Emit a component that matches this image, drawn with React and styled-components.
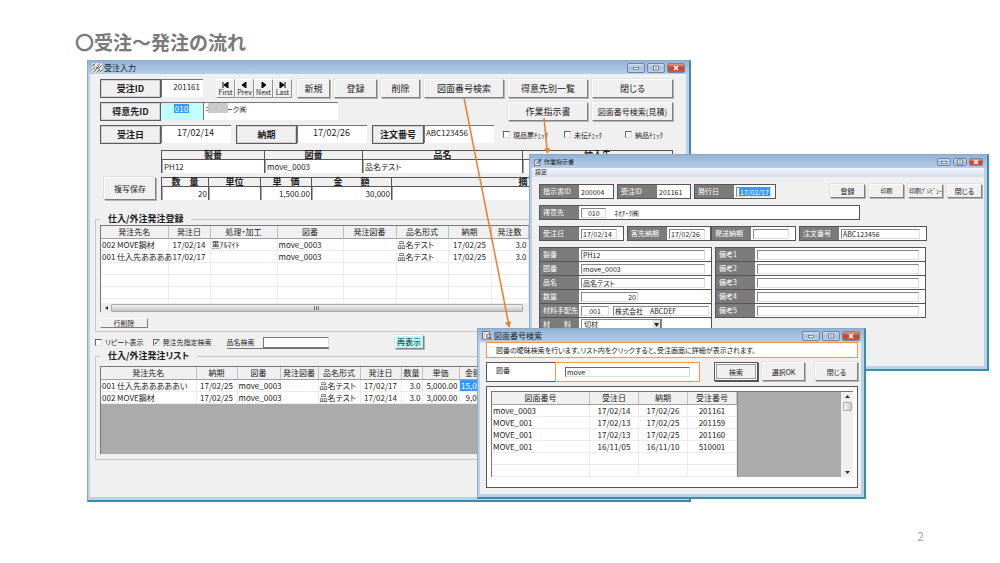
import styled, { createGlobalStyle, css } from "styled-components";

const GlobalStyle = createGlobalStyle`
  * {
    box-sizing: border-box;
  }
  body {
    margin: 0;
    background: #fff;
    color: #1c1c1c;
    font-family: "Noto Sans CJK JP", "Liberation Sans", sans-serif;
    font-size: 8px;
    line-height: 12px;
    font-feature-settings: "palt";
  }
  button,
  input,
  select {
    font: inherit;
    font-feature-settings: inherit;
    color: inherit;
    margin: 0;
    padding: 0;
    border-radius: 0;
    min-width: 0;
  }
`;

const Slide = styled.main`
  position: relative;
  min-height: 563px;
  overflow: hidden;
`;
const Heading = styled.h1`
  margin: 0;
  padding: 28px 0 0 75px;
  font-size: 19px;
  line-height: 28px;
  font-weight: 700;
  font-feature-settings: normal;
  color: #7a7a7a;
`;
const PageNumber = styled.div`
  position: absolute;
  right: 76px;
  bottom: 18px;
  font-size: 12px;
  line-height: 18px;
  color: #a6a6a6;
`;
const Arrows = styled.svg`
  position: absolute;
  top: 0;
  left: 0;
  width: 100%;
  height: 563px;
  pointer-events: none;
`;

/* windows */
const Window = styled.section`
  position: absolute;
  left: ${(p) => p.$left};
  top: ${(p) => p.$top};
  width: ${(p) => p.$width};
  background: #b9d1ea;
  border: 1px solid #8ea9c4;
  border-right: 2px solid #3c8da8;
  border-bottom: 2px solid #3c8da8;
  padding: 0 3px 3px 2px;
`;
const TitleBar = styled.header`
  display: flex;
  align-items: center;
  gap: 2px;
  height: 13px;
  margin: 0 -3px 0 -2px;
  padding: 0 4px;
  background: linear-gradient(#93b4d6, #b5cee8);
`;
const Title = styled.h2`
  flex: 1;
  margin: 0;
  font-size: ${(p) => (p.$small ? "6px" : "8px")};
  line-height: 12px;
  font-weight: 400;
`;
const WinButton = styled.button`
  display: flex;
  align-items: center;
  justify-content: center;
  width: ${(p) => (p.$small ? "14px" : "18px")};
  height: ${(p) => (p.$small ? "8px" : "10px")};
  border: 1px solid #7088a5;
  border-radius: 2px;
  background: ${(p) =>
    p.$close
      ? "linear-gradient(#e09a8b, #c4402a 50%, #cf5b40)"
      : "linear-gradient(#c9dbee, #a5c0dc 50%, #b8d0e8)"};
`;
const Body = styled.div`
  background: #f0f0f0;
  padding: ${(p) => p.$pad};
`;

/* shared controls */
const Button = styled.button`
  flex: none;
  width: ${(p) => p.$w};
  height: ${(p) => p.$h || "19px"};
  font-size: ${(p) => p.$size || "9px"};
  line-height: 12px;
  white-space: nowrap;
  background: ${(p) => (p.$aqua ? "#b4f8f8" : "#f0f0f0")};
  border: 1px solid;
  border-color: #fff #808080 #808080 #fff;
  box-shadow: 1px 1px 0 #b4b4b4, -1px -1px 0 #e0e0e0;
  ${(p) =>
    p.$isDefault &&
    css`
      border-color: #555;
      box-shadow: inset 0 0 0 1px #fff, inset 0 0 0 2px #999, 1px 1px 0 #555;
    `}
`;
const Row = styled.div`
  display: flex;
  margin-bottom: ${(p) => p.$mb || "4px"};
`;
const RightButtons = styled.div`
  display: flex;
  gap: 4px;
  margin-left: auto;
`;
const Spacer = styled.div`
  flex: none;
  width: ${(p) => p.$w};
`;
const Caption = styled.label`
  flex: none;
  width: ${(p) => p.$w || "61px"};
  height: 19px;
  border: 1px solid #5c5c5c;
  box-shadow: inset 0 0 0 1px #d0d0d0;
  font-size: 9px;
  line-height: 17px;
  font-weight: 700;
  text-align: center;
`;
const TextBox = styled.input`
  flex: none;
  width: ${(p) => p.$w};
  height: 18px;
  padding: 0 3px 5px 1px;
  border: 0;
  border-top: 1px solid #777;
  border-left: 1px solid #777;
  background: #fff;
  font-size: ${(p) => p.$size || "9px"};
  text-align: ${(p) => p.$align || "left"};
`;
const AquaCell = styled.div`
  flex: none;
  width: 42px;
  height: 18px;
  padding: 1px 0 0 13px;
  border-top: 1px solid #777;
  background: #c0ffff;
`;
const SelectedInput = styled.input`
  display: block;
  width: ${(p) => p.$w};
  height: ${(p) => p.$h};
  border: 0;
  background: #3399ff;
  color: #fff;
  font-size: ${(p) => p.$size};
  line-height: 8px;
  text-align: center;
`;
const MaskedField = styled.div`
  position: relative;
  display: flex;
`;
const CompanyBox = styled(TextBox)`
  font-feature-settings: normal;
`;
const Mask = styled.span`
  position: absolute;
  left: 5px;
  top: 1px;
  width: 20px;
  height: 10px;
  border-radius: 1px;
  background: rgba(200, 200, 200, 0.95);
`;
const NavButton = styled.button`
  display: flex;
  flex-direction: column;
  align-items: center;
  width: 19px;
  height: 19px;
  padding-top: 2px;
  border: 1px solid;
  border-color: #fff #909090 #909090 #fff;
  background: #f0f0f0;
  font-size: 7px;
  line-height: 8px;
`;
const CheckLabel = styled.label`
  display: flex;
  align-items: center;
  gap: 3px;
  font-size: 7px;
  white-space: nowrap;
`;
const CheckRow = styled.div`
  display: grid;
  grid-template-columns: 61px 61px auto;
`;
const Check = styled.input`
  appearance: none;
  display: grid;
  place-items: center;
  width: 7px;
  height: 7px;
  background: #fff;
  border: 1px solid #ddd;
  border-top-color: #666;
  border-left-color: #666;
  &:checked::before {
    content: "✓";
    font-family: "DejaVu Sans", sans-serif;
    font-size: 8px;
    line-height: 6px;
    font-weight: 700;
  }
`;

/* caption-over-value strips */
const Strip = styled.div`
  flex: 1;
  display: grid;
  grid-template-columns: ${(p) => p.$cols};
  border-right: 1px solid #555;
`;
const StripField = styled.label`
  display: block;
  border-left: 1px solid #555;
  text-align: center;
`;
const StripHead = styled.span`
  display: block;
  height: 10px;
  border-top: 1px solid #555;
  border-bottom: 1px solid #555;
  font-size: 9px;
  line-height: 8px;
  font-weight: 700;
  white-space: pre;
`;
const StripInput = styled.input`
  display: block;
  width: 100%;
  height: 13px;
  padding: 0 1px;
  border: 0;
  border-left: 1px solid #aaa;
  background: #fff;
  font-size: 8px;
  text-align: ${(p) => p.$align || "left"};
`;

/* list grids */
const Group = styled.fieldset`
  min-width: 0;
  margin: 0 -8px 0 -5px;
  padding: ${(p) => p.$pad};
  border: 1px solid #c8c8c8;
`;
const Legend = styled.legend`
  padding: 0 8px;
  font-size: 9px;
  line-height: 12px;
  font-weight: 700;
`;
const ListBox = styled.div`
  height: ${(p) => p.$h};
  overflow: hidden;
  background: ${(p) => p.$bg || "#fff"};
  border-top: 1px solid #777;
  border-left: 1px solid #777;
`;
const Table = styled.table`
  width: 100%;
  table-layout: fixed;
  border-collapse: collapse;
  background: #fff;
`;
const Th = styled.th`
  height: 12px;
  padding: 0;
  background: #f0f0f0;
  border-right: 1px solid #c0c0c0;
  border-bottom: 1px solid #a0a0a0;
  font-weight: 400;
  line-height: 11px;
  white-space: nowrap;
`;
const Td = styled.td`
  height: 12px;
  padding: 0 1px;
  border-right: 1px solid #ececec;
  border-bottom: 1px solid #ececec;
  line-height: 11px;
  white-space: nowrap;
  text-align: ${(p) => p.$align || "left"};
  ${(p) =>
    p.$selected &&
    css`
      background: #3399ff;
      color: #fff;
    `}
`;
const HScroll = styled.div`
  display: flex;
  align-items: center;
  height: 9px;
  padding-left: 4px;
  border-left: 1px solid #777;
  background: #ececec;
`;
const HThumb = styled.div`
  display: flex;
  align-items: center;
  justify-content: center;
  width: 412px;
  height: 8px;
  margin-left: 3px;
  border: 1px solid #aaa;
  border-radius: 1px;
  background: linear-gradient(#f4f4f4, #c4c4c4);
`;
const DeleteRow = styled.button`
  display: block;
  width: 48px;
  height: 10px;
  margin-top: 6px;
  border: 1px solid;
  border-color: #fff #808080 #808080 #fff;
  background: #f0f0f0;
  font-size: 7px;
  line-height: 8px;
`;
const OptionRow = styled.div`
  display: flex;
  align-items: center;
  gap: 9px;
  height: 18px;
  margin-left: -5px;
  padding-top: 2px;
`;
const SearchLabel = styled.label`
  display: flex;
  align-items: flex-start;
  gap: 8px;
  margin-left: 6px;
  border-bottom: 1px solid #777;
  font-size: 7px;
`;
const SearchInput = styled.input`
  width: 66px;
  height: 11px;
  margin-top: 1px;
  border: 1px solid #777;
  border-right-color: #ddd;
  background: #fff;
`;

/* work order form */
const MenuBar = styled.nav`
  height: 9px;
  padding-left: 3px;
  background: linear-gradient(#f4f6fb, #d5dcee);
  font-size: 6px;
  line-height: 8px;
`;
const MenuItem = styled.button`
  display: block;
  border: 0;
  background: none;
`;
const FormRow = styled.div`
  display: flex;
  align-items: flex-start;
  gap: 3px;
  margin-bottom: 6px;
  font-size: 7px;
`;
const FieldBox = styled.div`
  display: flex;
  width: ${(p) => p.$w};
  height: 15px;
  border: 1px solid #555;
  background: #fff;
`;
const FieldLabel = styled.label`
  flex: none;
  width: 39px;
  padding-left: 3px;
  background: #7b7b7b;
  color: #fff;
  line-height: 12px;
  white-space: pre;
`;
const FieldBody = styled.div`
  flex: 1;
  display: flex;
  align-items: center;
  gap: 4px;
  min-width: 0;
  padding-left: 2px;
`;
const Plain = styled.input`
  width: 100%;
  height: 12px;
  padding-left: ${(p) => (p.$indent ? "4px" : "0")};
  border: 0;
  background: none;
  font-feature-settings: normal;
`;
const Sunken = styled.input`
  width: ${(p) => p.$w};
  height: 10px;
  padding: 0 1px;
  border: 1px solid #ddd;
  border-top-color: #888;
  border-left-color: #888;
  background: #fff;
  line-height: 8px;
  text-align: ${(p) => p.$align || "left"};
`;
const IssueBox = styled.div`
  width: 35px;
  height: 10px;
  padding: 0 0 0 2px;
  border: 1px solid #ddd;
  border-top-color: #888;
  border-left-color: #888;
`;
const JoinedFields = styled.div`
  display: flex;
`;
const SelectWrap = styled.div`
  position: relative;
  display: flex;
`;
const Select = styled.select`
  appearance: none;
  width: 81px;
  height: 11px;
  padding-left: 2px;
  border: 1px solid #888;
  background: #fff;
  line-height: 9px;
`;
const SelectArrow = styled.span`
  position: absolute;
  right: 1px;
  top: 1px;
  width: 8px;
  height: 9px;
  background: #e4e4e4;
  border-right: 1px solid #777;
  border-bottom: 1px solid #777;
  font-size: 5px;
  line-height: 8px;
  text-align: center;
  pointer-events: none;
`;
const FormColumn = styled.div`
  width: ${(p) => p.$w};
  padding-top: 1px;
  ${FieldBox} {
    margin-top: -1px;
  }
`;

/* number search */
const Message = styled.p`
  height: 16px;
  margin: 0 0 4px;
  padding-left: 9px;
  border: 1px solid #f59b3c;
  background: #fff;
  font-size: 7px;
  line-height: 14px;
  white-space: nowrap;
`;
const SearchCaption = styled.label`
  width: 69px;
  height: 20px;
  padding-left: 9px;
  border: 1px solid #555;
  border-right: 0;
  background: #fff;
  font-size: 7px;
  line-height: 15px;
`;
const SearchCell = styled.div`
  width: 145px;
  height: 20px;
  padding: 4px 9px;
  border: 1px solid #f59b3c;
  background: #fff;
`;
const KeyInput = styled.input`
  display: block;
  width: 100%;
  height: 10px;
  padding-left: 1px;
  border: 1px solid #ddd;
  border-top: 1px solid #666;
  border-left: 1px solid #666;
  font-size: 7px;
  line-height: 8px;
`;
const Panel = styled.div`
  height: 102px;
  padding: 4px;
  border: 1px solid #555;
  background: #fff;
`;
const ResultBox = styled.div`
  display: flex;
  height: 86px;
  overflow: hidden;
  border-top: 1px solid #777;
  border-left: 1px solid #777;
  background: #ababab;
`;
const ResultTable = styled.div`
  width: 246px;
  border-right: 1px solid #888;
  background: #fff;
`;
const VScroll = styled.div`
  display: flex;
  flex-direction: column;
  align-items: center;
  width: 12px;
  margin-left: auto;
  padding: 3px 0;
  background: #f0f0f0;
`;
const VThumb = styled.div`
  width: 9px;
  height: 9px;
  margin: 4px 0 auto;
  border: 1px solid #aaa;
  border-radius: 1px;
  background: linear-gradient(90deg, #f6f6f6, #ccc);
`;

const orderColumns = [
  { label: "発注先名", w: 67 },
  { label: "発注日", w: 42, align: "center" },
  { label: "処理・加工", w: 67 },
  { label: "図番", w: 66 },
  { label: "発注図番", w: 53 },
  { label: "品名形式", w: 52 },
  { label: "納期", w: 43, align: "center" },
  { label: "発注数", w: 37, align: "right" },
  { label: "" },
];
const orderRows = [
  ["002 MOVE鋼材", "17/02/14", "黒ｱﾙﾏｲﾄ", "move_0003", "", "品名テスト", "17/02/25", "3.0", ""],
  ["001 仕入先ああああ", "17/02/17", "", "move_0003", "", "品名テスト", "17/02/25", "3.0", ""],
  ...Array.from({ length: 5 }, () => Array(9).fill("")),
];
const listColumns = [
  { label: "発注先名", w: 95 },
  { label: "納期", w: 41, align: "center" },
  { label: "図番", w: 43 },
  { label: "発注図番", w: 38 },
  { label: "品名形式", w: 42 },
  { label: "発注日", w: 41, align: "center" },
  { label: "数量", w: 21, align: "right" },
  { label: "単価", w: 37, align: "right" },
  { label: "金額", w: 28, align: "right" },
  { label: "" },
];
const listRows = [
  ["001 仕入先あああああい", "17/02/25", "move_0003", "", "品名テスト", "17/02/17", "3.0", "5,000.00", "15,000", ""],
  ["002 MOVE鋼材", "17/02/25", "move_0003", "", "品名テスト", "17/02/14", "3.0", "3,000.00", "9,000", ""],
];
const resultColumns = [
  { label: "図面番号" },
  { label: "受注日", w: 49, align: "center" },
  { label: "納期", w: 49, align: "center" },
  { label: "受注番号", w: 49, align: "center" },
];
const resultRows = [
  ["move_0003", "17/02/14", "17/02/26", "201161"],
  ["MOVE_001", "17/02/13", "17/02/25", "201159"],
  ["MOVE_001", "17/02/13", "17/02/25", "201160"],
  ["MOVE_001", "16/11/05", "16/11/10", "510001"],
  ["", "", "", ""],
  ["", "", "", ""],
];
const remarks = ["備考1", "備考2", "備考3", "備考4", "備考5"];
const navItems = [
  ["First", "M2 0v6M7 0L3 3l4 3z"],
  ["Prev", "M6 0L2 3l4 3z"],
  ["Next", "M3 0l4 3-4 3z"],
  ["Last", "M2 0l4 3-4 3zM7 0v6"],
];

const List = ({ columns, rows, selected }) => (
  <Table>
    <colgroup>
      {columns.map((c, i) => (
        <col key={i} width={c.w} />
      ))}
    </colgroup>
    <thead>
      <tr>
        {columns.map((c, i) => (
          <Th key={i}>{c.label}</Th>
        ))}
      </tr>
    </thead>
    <tbody>
      {rows.map((row, r) => (
        <tr key={r}>
          {row.map((cell, i) => (
            <Td key={i} $align={columns[i].align} $selected={selected === `${r}-${i}`}>
              {cell}
            </Td>
          ))}
        </tr>
      ))}
    </tbody>
  </Table>
);

const WindowBar = ({ icon, title, small }) => (
  <TitleBar>
    {icon}
    <Title $small={small}>{title}</Title>
    <WinButton $small={small} aria-label="最小化">
      <svg width="8" height="6" viewBox="0 0 8 6">
        <rect x="1.5" y="2.5" width="5" height="2" fill="#fff" stroke="#555" strokeWidth=".6" />
      </svg>
    </WinButton>
    <WinButton $small={small} aria-label="最大化">
      <svg width="8" height="6" viewBox="0 0 8 6">
        <rect x="1.5" y="1" width="5" height="4" fill="#fff" stroke="#555" strokeWidth=".7" />
        <rect x="3.2" y="2.4" width="1.6" height="1.2" fill="#555" />
      </svg>
    </WinButton>
    <WinButton $small={small} $close aria-label="閉じる">
      <svg width="8" height="6" viewBox="0 0 8 6">
        <path d="M2 1l4 4M6 1L2 5" stroke="#fff" strokeWidth="1.5" />
      </svg>
    </WinButton>
  </TitleBar>
);

const HatchIcon = () => (
  <svg width="10" height="10" viewBox="0 0 10 10">
    <rect width="10" height="10" fill="#e8e8e8" />
    <path
      d="M0 3.500L3 .5M.5 6.500l2.500-2.500M5.500 3L8 .5M3 7l4-4M1 9.500l3-3M6.500 5.500L9.500 2.500M4.500 9.500L8 6M7.500 9.500L10 7"
      stroke="#333"
      strokeWidth=".8"
    />
    <path d="M1 1l2 2M7 7l2 2M4 4l2 2" stroke="#555" strokeWidth=".7" />
  </svg>
);
const FormIcon = () => (
  <svg width="8" height="8" viewBox="0 0 8 8">
    <path d="M1 2h5v5.500H0z" fill="#fff" stroke="#446" strokeWidth=".7" />
    <path d="M1.500 4h2M1.500 5.500h2" stroke="#668" strokeWidth=".6" />
    <path d="M3 5l3.500-4.500 1 1L4 6z" fill="#335a9c" />
  </svg>
);
const LookupIcon = () => (
  <svg width="10" height="9" viewBox="0 0 10 9">
    <path d="M.5.500h7v7.500h-7z" fill="#fff" stroke="#555" strokeWidth=".8" />
    <path d="M2 2v4.500M2 2h2" stroke="#777" strokeWidth=".6" />
    <circle cx="6.300" cy="5" r="1.900" fill="#eef" stroke="#333" strokeWidth=".8" />
    <path d="M7.600 6.400L9.500 8.500" stroke="#333" strokeWidth="1" />
  </svg>
);

const Field = ({ id, label, w, children }) => (
  <FieldBox $w={w}>
    <FieldLabel htmlFor={id}>{label}</FieldLabel>
    <FieldBody>{children}</FieldBody>
  </FieldBox>
);

const StripItem = ({ label, value, align }) => (
  <StripField>
    <StripHead>{label}</StripHead>
    <StripInput $align={align} defaultValue={value} />
  </StripField>
);

const OrderWindow = () => (
  <Window $left="8.7%" $top="60px" $width="60.4%">
    <WindowBar icon={<HatchIcon />} title="受注入力" />
    <Body $pad="5px 13px 37px 10px">
      <Row>
        <Caption htmlFor="orderId">受注ID</Caption>
        <TextBox id="orderId" $w="42px" $align="right" $size="8px" defaultValue="201161" />
        <Spacer $w="13px" />
        {navItems.map(([name, d]) => (
          <NavButton key={name}>
            <svg width="9" height="6" viewBox="0 0 9 6">
              <path d={d} fill="#000" stroke="#000" strokeWidth="1" />
            </svg>
            {name}
          </NavButton>
        ))}
        <RightButtons>
          <Button $w="33px">新規</Button>
          <Button $w="43px">登録</Button>
          <Button $w="39px">削除</Button>
          <Button $w="80px">図面番号検索</Button>
          <Button $w="80px">得意先別一覧</Button>
          <Button $w="81px">閉じる</Button>
        </RightButtons>
      </Row>
      <Row>
        <Caption htmlFor="customerId">得意先ID</Caption>
        <AquaCell>
          <SelectedInput id="customerId" $w="15px" $h="9px" $size="8px" defaultValue="010" />
        </AquaCell>
        <MaskedField>
          <CompanyBox $w="135px" $size="7px" aria-label="得意先名" defaultValue="ネオアーク㈱" />
          <Mask />
        </MaskedField>
        <RightButtons>
          <Button $w="80px">作業指示書</Button>
          <Button $w="81px" $size="8px">
            図面番号検索(見積)
          </Button>
        </RightButtons>
      </Row>
      <Row $mb="6px">
        <Caption htmlFor="orderDate">受注日</Caption>
        <TextBox id="orderDate" $w="70px" $align="center" defaultValue="17/02/14" />
        <Spacer $w="5px" />
        <Caption htmlFor="dueDate">納期</Caption>
        <TextBox id="dueDate" $w="70px" $align="center" defaultValue="17/02/26" />
        <Spacer $w="5px" />
        <Caption $w="52px" htmlFor="poNumber">
          注文番号
        </Caption>
        <TextBox id="poNumber" $w="70px" $size="8px" defaultValue="ABC123456" />
        <Spacer $w="9px" />
        <CheckRow>
          <CheckLabel>
            <Check type="checkbox" />
            現品票ﾁｪｯｸ
          </CheckLabel>
          <CheckLabel>
            <Check type="checkbox" />
            未伝ﾁｪｯｸ
          </CheckLabel>
          <CheckLabel>
            <Check type="checkbox" />
            納品ﾁｪｯｸ
          </CheckLabel>
        </CheckRow>
      </Row>
      <Row>
        <Spacer $w="61px" />
        <Strip $cols="103px 98px 160px 1fr">
          <StripItem label="製番" value="PH12" />
          <StripItem label="図番" value="move_0003" />
          <StripItem label="品名" value="品名テスト" />
          <StripItem label="納入先" />
        </Strip>
      </Row>
      <Row $mb="13px">
        <Spacer $w="4px" />
        <Button $w="52px" $h="23px" $size="8px">
          複写保存
        </Button>
        <Spacer $w="5px" />
        <Strip $cols="47px 52px 51px 80px 1fr">
          <StripItem label="数　量" value="20" align="right" />
          <StripItem label="単位" />
          <StripItem label="単　価" value="1,500.00" align="right" />
          <StripItem label="金　　額" value="30,000" align="right" />
          <StripItem label="摘　要" />
        </Strip>
      </Row>
      <Group $pad="0 4px 3px">
        <Legend>仕入/外注発注登録</Legend>
        <ListBox $h="78px">
          <List columns={orderColumns} rows={orderRows} />
        </ListBox>
        <HScroll>
          <svg width="3" height="4" viewBox="0 0 3 4">
            <path d="M3 0L0 2l3 2z" fill="#333" />
          </svg>
          <HThumb>
            <svg width="6" height="4" viewBox="0 0 6 4">
              <path d="M.5 0v4M2.500 0v4M4.500 0v4" stroke="#555" strokeWidth=".8" />
            </svg>
          </HThumb>
        </HScroll>
        <DeleteRow>行削除</DeleteRow>
      </Group>
      <OptionRow>
        <CheckLabel>
          <Check type="checkbox" />
          リピート表示
        </CheckLabel>
        <CheckLabel>
          <Check type="checkbox" defaultChecked />
          発注先指定検索
        </CheckLabel>
        <SearchLabel>
          品名検索
          <SearchInput />
        </SearchLabel>
        <Spacer $w="48px" />
        <Button $w="29px" $h="14px" $size="8px" $aqua>
          再表示
        </Button>
      </OptionRow>
      <Group $pad="4px 4px 5px">
        <Legend>仕入/外注発注リスト</Legend>
        <ListBox $h="88px" $bg="#ababab">
          <List columns={listColumns} rows={listRows} selected="0-8" />
        </ListBox>
      </Group>
    </Body>
  </Window>
);

const WorkOrderWindow = () => (
  <Window $left="52.9%" $top="154px" $width="46%">
    <WindowBar small icon={<FormIcon />} title="作業指示書" />
    <MenuBar>
      <MenuItem>設定</MenuItem>
    </MenuBar>
    <Body $pad="7px 2px 28px 7px">
      <FormRow>
        <Field id="slip" label="指示書ID" w="75px">
          <Plain id="slip" defaultValue="200004" />
        </Field>
        <Field id="ord" label="受注ID" w="74px">
          <Plain id="ord" defaultValue="201161" />
        </Field>
        <Field id="issue" label="発行日" w="82px">
          <IssueBox>
            <SelectedInput id="issue" $w="31px" $h="8px" $size="7px" defaultValue="17/02/17" />
          </IssueBox>
        </Field>
        <RightButtons>
          <Button $w="35px" $h="14px" $size="7px">
            登録
          </Button>
          <Button $w="35px" $h="14px" $size="6px">
            印刷
          </Button>
          <Button $w="35px" $h="14px" $size="6px">
            印刷ﾌﾟﾚﾋﾞｭｰ
          </Button>
          <Button $w="35px" $h="14px" $size="7px">
            閉じる
          </Button>
        </RightButtons>
      </FormRow>
      <FormRow>
        <Field id="cust" label="得意先" w="321px">
          <Sunken id="cust" $w="28px" $align="center" defaultValue="010" />
          <Plain $indent aria-label="得意先名" defaultValue="ﾈｵｱｰｸ㈱" />
        </Field>
      </FormRow>
      <FormRow>
        <Field id="od" label="受注日" w="85px">
          <Sunken id="od" $w="36px" defaultValue="17/02/14" />
        </Field>
        <JoinedFields>
          <Field id="cd" label="客先納期" w="84px">
            <Sunken id="cd" $w="36px" defaultValue="17/02/26" />
          </Field>
          <Field id="sd" label="発送納期" w="85px">
            <Sunken id="sd" $w="36px" />
          </Field>
        </JoinedFields>
        <Field id="po" label="注文番号" w="128px">
          <Sunken id="po" $w="79px" defaultValue="ABC123456" />
        </Field>
      </FormRow>
      <FormRow>
        <FormColumn $w="173px">
          <Field id="f1" label="製番">
            <Sunken id="f1" $w="124px" defaultValue="PH12" />
          </Field>
          <Field id="f2" label="図番">
            <Sunken id="f2" $w="124px" defaultValue="move_0003" />
          </Field>
          <Field id="f3" label="品名">
            <Sunken id="f3" $w="124px" defaultValue="品名テスト" />
          </Field>
          <Field id="f4" label="数量">
            <Sunken id="f4" $w="57px" $align="right" defaultValue="20" />
          </Field>
          <Field id="f5" label="材料手配先">
            <Sunken id="f5" $w="28px" $align="center" defaultValue="001" />
            <Sunken aria-label="手配先名" $w="96px" defaultValue="株式会社　ABCDEF" />
          </Field>
          <Field id="f6" label="材　　料">
            <SelectWrap>
              <Select id="f6">
                <option>切材</option>
              </Select>
              <SelectArrow>▼</SelectArrow>
            </SelectWrap>
          </Field>
        </FormColumn>
        <FormColumn $w="211px">
          {remarks.map((r) => (
            <Field key={r} id={r} label={r}>
              <Sunken id={r} $w="162px" />
            </Field>
          ))}
        </FormColumn>
      </FormRow>
    </Body>
  </Window>
);

const SearchWindow = () => (
  <Window $left="47.7%" $top="328px" $width="38.9%">
    <WindowBar icon={<LookupIcon />} title="図面番号検索" />
    <Body $pad="0 3px 6px 6px">
      <Message>
        図番の曖昧検索を行います。リスト内をクリックすると、受注画面に詳細が表示されます。
      </Message>
      <Row>
        <SearchCaption htmlFor="key">図番</SearchCaption>
        <SearchCell>
          <KeyInput id="key" defaultValue="move" />
        </SearchCell>
        <RightButtons>
          <Button $w="44px" $size="7px" $isDefault>
            検索
          </Button>
          <Button $w="43px" $size="7px">
            選択OK
          </Button>
          <Spacer $w="2px" />
          <Button $w="43px" $size="7px">
            閉じる
          </Button>
        </RightButtons>
      </Row>
      <Panel>
        <ResultBox>
          <ResultTable>
            <List columns={resultColumns} rows={resultRows} />
          </ResultTable>
          <VScroll>
            <svg width="5" height="3" viewBox="0 0 5 3">
              <path d="M0 3l2.500-3L5 3z" fill="#333" />
            </svg>
            <VThumb />
            <svg width="5" height="3" viewBox="0 0 5 3">
              <path d="M0 0l2.500 3L5 0z" fill="#333" />
            </svg>
          </VScroll>
        </ResultBox>
      </Panel>
    </Body>
  </Window>
);

const App = () => {
  return (
    <Slide>
      <GlobalStyle />
      <Heading>〇受注～発注の流れ</Heading>
      <OrderWindow />
      <WorkOrderWindow />
      <SearchWindow />
      <Arrows viewBox="0 0 1000 563" preserveAspectRatio="none">
        <path d="M464 98L508.500 323M544 118l3 31" stroke="#ed7d31" strokeWidth="1.500" />
        <path d="M505 322.500l6-1.200-1.500 6.700zM544 148.500l6-.5-2.300 6z" fill="#ed7d31" />
      </Arrows>
      <PageNumber>2</PageNumber>
    </Slide>
  );
};

export default App;
